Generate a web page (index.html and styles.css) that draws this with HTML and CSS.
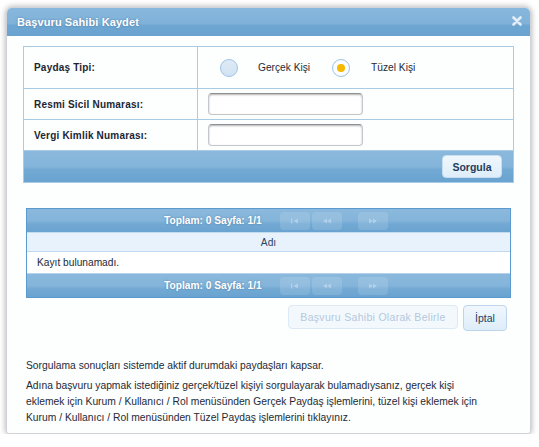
FILE: index.html
```html
<!DOCTYPE html>
<html lang="tr">
<head>
<meta charset="utf-8">
<link rel="stylesheet" href="styles.css">
</head>
<body>
<div class="dialog">
  <div class="titlebar">
    <span class="title">Başvuru Sahibi Kaydet</span>
    <svg class="close" width="10" height="10" viewBox="0 0 10 10"><path d="M1.5 1.5 L8.5 8.5 M8.5 1.5 L1.5 8.5" stroke="#e4edf6" stroke-width="2.6" stroke-linecap="round"/></svg>
  </div>
  <div class="content">
    <div class="form">
      <div class="row row-type">
        <div class="label">Paydaş Tipi:</div>
        <div class="field radios">
          <span class="radio"></span><span class="rlabel">Gerçek Kişi</span>
          <span class="radio checked"><span class="dot"></span></span><span class="rlabel">Tüzel Kişi</span>
        </div>
      </div>
      <div class="row">
        <div class="label">Resmi Sicil Numarası:</div>
        <div class="field"><span class="input"></span></div>
      </div>
      <div class="row">
        <div class="label">Vergi Kimlik Numarası:</div>
        <div class="field"><span class="input"></span></div>
      </div>
      <div class="formbar"><span class="btn sorgula">Sorgula</span></div>
    </div>

    <div class="grid">
      <div class="pager">
        <span class="ptext">Toplam: 0 Sayfa: 1/1</span>
        <span class="pbtn"><svg width="10" height="6" viewBox="0 0 10 6"><rect x="1" y="0.5" width="1.3" height="5"/><path d="M8 0.5 L3.5 3 L8 5.5Z"/></svg></span><span class="pbtn"><svg width="10" height="6" viewBox="0 0 10 6"><path d="M5 0.5 L1 3 L5 5.5Z M9 0.5 L5 3 L9 5.5Z"/></svg></span><span class="pbtn gap"><svg width="10" height="6" viewBox="0 0 10 6"><path d="M1 0.5 L5 3 L1 5.5Z M5 0.5 L9 3 L5 5.5Z"/></svg></span>
      </div>
      <div class="ghead">Adı</div>
      <div class="grow">Kayıt bulunamadı.</div>
      <div class="pager">
        <span class="ptext">Toplam: 0 Sayfa: 1/1</span>
        <span class="pbtn"><svg width="10" height="6" viewBox="0 0 10 6"><rect x="1" y="0.5" width="1.3" height="5"/><path d="M8 0.5 L3.5 3 L8 5.5Z"/></svg></span><span class="pbtn"><svg width="10" height="6" viewBox="0 0 10 6"><path d="M5 0.5 L1 3 L5 5.5Z M9 0.5 L5 3 L9 5.5Z"/></svg></span><span class="pbtn gap"><svg width="10" height="6" viewBox="0 0 10 6"><path d="M1 0.5 L5 3 L1 5.5Z M5 0.5 L9 3 L5 5.5Z"/></svg></span>
      </div>
    </div>

    <div class="actions">
      <span class="btn disabled">Başvuru Sahibi Olarak Belirle</span>
      <span class="btn iptal">İptal</span>
    </div>

    <div class="notes">
      <p>Sorgulama sonuçları sistemde aktif durumdaki paydaşları kapsar.</p>
      <p>Adına başvuru yapmak istediğiniz gerçek/tüzel kişiyi sorgulayarak bulamadıysanız, gerçek kişi<br>eklemek için Kurum / Kullanıcı / Rol menüsünden Gerçek Paydaş işlemlerini, tüzel kişi eklemek için<br>Kurum / Kullanıcı / Rol menüsünden Tüzel Paydaş işlemlerini tıklayınız.</p>
    </div>
  </div>
</div>
</body>
</html>
```

FILE: styles.css
```css
* { box-sizing: border-box; }
html, body { margin: 0; padding: 0; background: #ffffff; }
body { font-family: "Liberation Sans", Arial, sans-serif; color: #1d2a36; }

.dialog {
  margin: 7px 0 0 6px;
  width: 525px;
  height: 427px;
  background: #fdfefe;
  border: 1px solid #d0d4d8;
  border-radius: 6px 6px 3px 3px;
  box-shadow: 0 0 6px rgba(0,0,0,0.35);
  overflow: hidden;
}

.titlebar {
  height: 28px;
  display: flex;
  align-items: center;
  justify-content: space-between;
  padding: 0 8px 0 10px;
  background: linear-gradient(to bottom, #87b7dc 0%, #80b2d9 55%, #6ea6d2 62%, #6aa3d0 100%);
}
.title {
  color: #ffffff;
  font-weight: bold;
  font-size: 11px;
  letter-spacing: 0.1px;
  text-shadow: 0 0 2px rgba(40,80,120,0.6);
}
.close { margin-top: -2px; }

.content { padding: 10px 0 0 16px; }

.form {
  width: 491px;
  border: 1px solid #a8cbe6;
}
.row {
  display: flex;
  height: 31px;
  border-bottom: 1px solid #a8cbe6;
}
.row-type { height: 42px; }
.label {
  width: 174px;
  border-right: 1px solid #a8cbe6;
  display: flex;
  align-items: center;
  padding-left: 10px;
  font-weight: bold;
  font-size: 10px;
  letter-spacing: 0.2px;
  color: #1b2633;
}
.field {
  flex: 1;
  display: flex;
  align-items: center;
  padding-left: 10px;
}
.input {
  width: 155px;
  height: 22px;
  border: 1px solid #c3c7cb;
  border-top-color: #8d9196;
  border-radius: 4px;
  background: #fff;
  box-shadow: inset 0 1px 2px rgba(0,0,0,0.3);
}
.radios { padding-left: 22px; font-size: 10.2px; color: #1d2a36; }
.radio {
  width: 18px;
  height: 18px;
  border-radius: 50%;
  border: 1px solid #9cc4e6;
  background: linear-gradient(to bottom, #dfeaf5 0%, #d2e3f3 100%);
  display: inline-flex;
  align-items: center;
  justify-content: center;
}
.radio.checked { background: #fafcfe; }
.dot { width: 8px; height: 8px; border-radius: 50%; background: #f6b800; }
.rlabel { margin-left: 20px; margin-right: 22px; }
.rlabel:last-child { margin-left: 21px; }

.formbar {
  height: 31px;
  display: flex;
  align-items: center;
  justify-content: flex-end;
  padding-right: 11px;
  background: linear-gradient(to bottom, #8bb9dd 0%, #84b4da 50%, #72a9d4 60%, #6aa3d0 100%);
}
.btn {
  display: inline-flex;
  align-items: center;
  justify-content: center;
  border-radius: 4px;
  font-size: 10.5px;
}
.sorgula {
  width: 60px;
  height: 23px;
  background: linear-gradient(to bottom, #f0f7fd, #deedf9);
  border: 1px solid #c7def0;
  color: #233d5c;
  font-weight: bold;
}

.grid {
  margin: 25px 0 0 3px;
  width: 485px;
  border: 1px solid #5b9ad0;
}
.pager {
  height: 23px;
  display: flex;
  align-items: center;
  padding-left: 137px;
  background: linear-gradient(to bottom, #8bb9dd 0%, #84b4da 50%, #72a9d4 65%, #6aa3d0 100%);
}
.ptext {
  color: #ffffff;
  font-weight: bold;
  font-size: 10.2px;
  text-shadow: 0 0 2px rgba(40,80,120,0.5);
  width: 116px;
}
.pbtn {
  width: 30px;
  height: 18px;
  margin-right: 2px;
  border-radius: 4px;
  background: rgba(255,255,255,0.13);
  fill: rgba(200,222,242,0.6);
  display: inline-flex;
  align-items: center;
  justify-content: center;
}
.pbtn.gap { margin-left: 14px; }
.ghead {
  height: 20px;
  background: #e8f2fc;
  border-top: 1px solid #c4dcf0;
  border-bottom: 1px solid #c0d9ee;
  display: flex;
  align-items: center;
  justify-content: center;
  font-size: 10.2px;
  color: #2a4460;
}
.grow {
  height: 22px;
  background: #ffffff;
  display: flex;
  align-items: center;
  padding-left: 10px;
  font-size: 10.2px;
  border-bottom: 1px solid #b5d2ea;
}

.actions {
  width: 491px;
  display: flex;
  justify-content: flex-end;
  gap: 5px;
  margin-top: 7px;
  padding-right: 7px;
}
.disabled {
  width: 170px;
  height: 24px;
  background: #f3f8fd;
  border: 1px solid #dde9f4;
  color: #b4c8dc;
  letter-spacing: 0.3px;
}
.iptal {
  width: 44px;
  height: 26px;
  background: linear-gradient(to bottom, #f0f7fd, #deedf9);
  border: 1px solid #bcd5ea;
  color: #233d5c;
}

.notes {
  margin-top: 27px;
  padding-left: 3px;
  font-size: 10.3px;
  color: #1d2a36;
}
.notes p { margin: 0 0 4px 0; line-height: 16px; }
```
